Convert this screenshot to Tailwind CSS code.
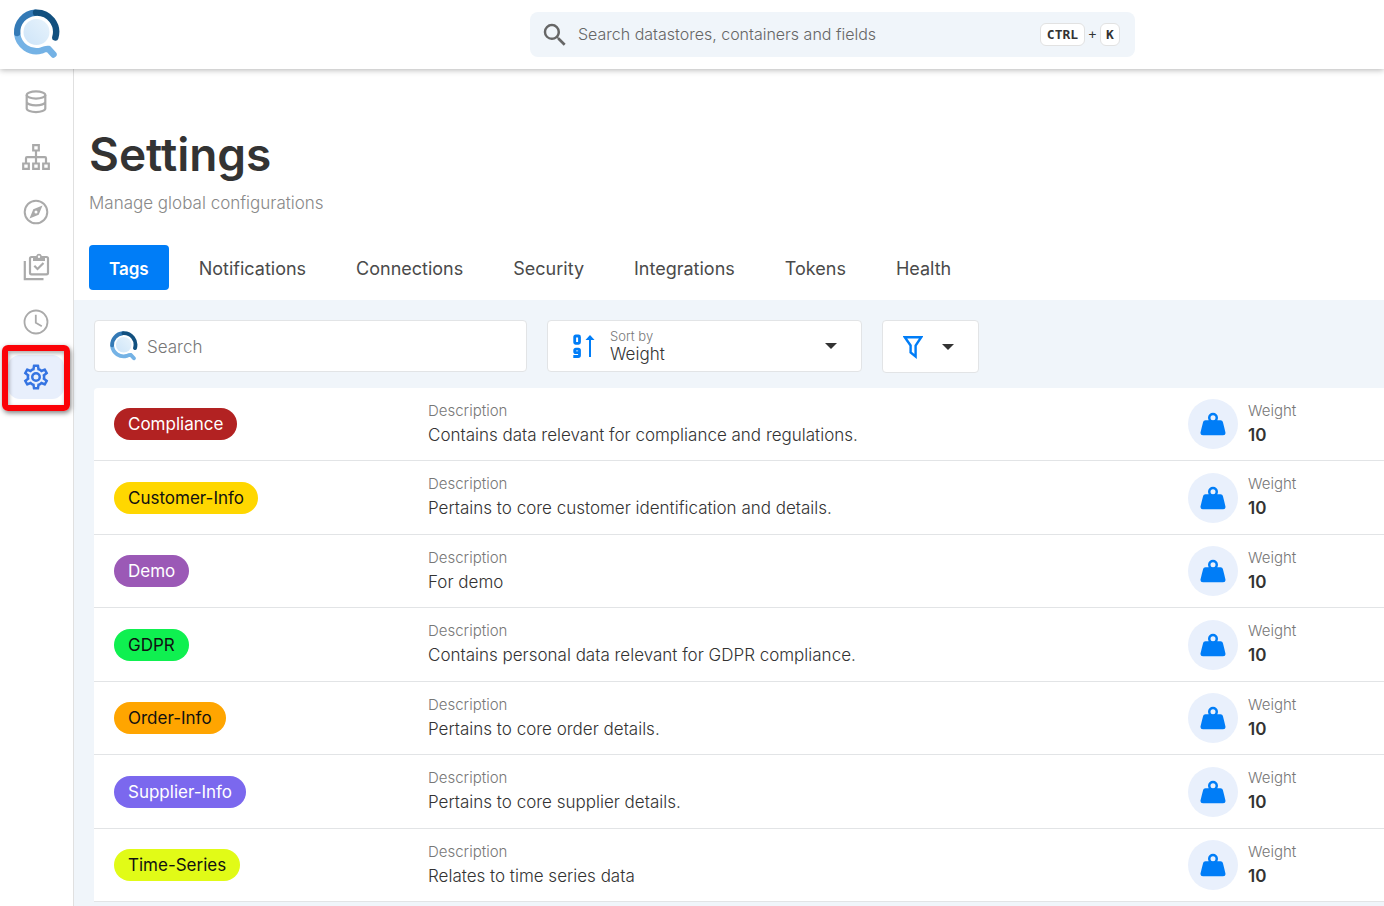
<!DOCTYPE html>
<html lang="en">
<head>
<meta charset="utf-8">
<meta name="viewport" content="width=device-width, initial-scale=1">
<title>Settings</title>
<script src="https://cdn.jsdelivr.net/npm/@tailwindcss/browser@4"></script>
</head>
<body class="flex h-screen flex-col overflow-hidden bg-white font-['Inter',sans-serif] text-[#333]">

<svg class="absolute size-0" aria-hidden="true">
  <defs>
    <linearGradient id="lens" x1="1" y1="0" x2="0" y2="1"><stop offset="0" stop-color="#e8f3fc"/><stop offset="1" stop-color="#cde4f8"/></linearGradient>
    <symbol id="logo" viewBox="0 0 48 50">
      <circle cx="23.500" cy="23" r="13" fill="url(#lens)"/>
      <g fill="none" stroke-width="6.400" stroke-linecap="round" stroke-linejoin="round">
        <path stroke="#74b2e5" d="M4.200 25A19.400 19.400 0 0 0 28.500 41.500Q33 39.500 35.500 40L40.500 45.500"/>
        <path stroke="#347ab6" d="M4.200 24A19.400 19.400 0 0 1 22 3.700"/>
        <path stroke="#12507f" d="M23 3.600A19.400 19.400 0 0 1 42.300 28.500"/>
      </g>
    </symbol>
    <symbol id="weight" viewBox="0 0 24 24">
      <path d="M12,3A4,4 0 0,1 16,7C16,7.730 15.810,8.410 15.460,9H18C18.950,9 19.750,9.670 19.950,10.560C21.960,18.570 22,18.780 22,19A2,2 0 0,1 20,21H4A2,2 0 0,1 2,19C2,18.780 2.040,18.570 4.050,10.560C4.250,9.670 5.050,9 6,9H8.540C8.190,8.410 8,7.730 8,7A4,4 0 0,1 12,3M12,5A2,2 0 0,0 10,7A2,2 0 0,0 12,9A2,2 0 0,0 14,7A2,2 0 0,0 12,5Z"/>
    </symbol>
  </defs>
</svg>

<header class="relative z-10 grid h-[69px] shrink-0 grid-cols-[530px_1fr_249px] items-center bg-white shadow-[0_1px_6px_rgba(0,0,0,0.3)]">
  <a href="#" aria-label="Home" class="ml-[13px] block w-12 pb-[2px]"><svg class="h-[50px] w-12"><use href="#logo"/></svg></a>
  <div class="flex h-[45px] items-center rounded-lg bg-[#f0f5fa] pr-[15px] pl-[10px]">
    <svg class="size-[30px] shrink-0 fill-[#666]" viewBox="0 0 24 24"><path d="M9.500,3A6.500,6.500 0 0,1 16,9.500C16,11.110 15.410,12.590 14.440,13.730L14.710,14H15.500L20.500,19L19,20.500L14,15.500V14.710L13.730,14.440C12.590,15.410 11.110,16 9.500,16A6.500,6.500 0 0,1 3,9.500A6.500,6.500 0 0,1 9.500,3M9.500,5C7,5 5,7 5,9.500C5,12 7,14 9.500,14C12,14 14,12 14,9.500C14,7 12,5 9.500,5Z"/></svg>
    <input type="search" aria-label="Search datastores, containers and fields" placeholder="Search datastores, containers and fields" class="ml-2 min-w-0 flex-1 bg-transparent pb-[2px] text-[16px] font-light outline-none placeholder:text-[#666]">
    <div class="flex items-center font-['DejaVu_Sans_Mono',monospace] text-[13px] font-bold">
      <kbd class="flex h-[23px] w-[45px] items-center justify-center rounded-md border border-[#e2e2e2] bg-white font-['DejaVu_Sans_Mono',monospace]">CTRL</kbd>
      <span class="w-[15px] text-center font-normal">+</span>
      <kbd class="flex h-[23px] w-5 items-center justify-center rounded-md border border-[#e2e2e2] bg-white font-['DejaVu_Sans_Mono',monospace]">K</kbd>
    </div>
  </div>
</header>

<div class="flex min-h-0 flex-1">
  <nav aria-label="Main" class="w-[74px] shrink-0 border-r border-[#e0e0e0] pt-[11px]">
    <ul class="flex w-[72px] flex-col gap-[11px] text-[#aaa]">
      <li><a href="#" aria-label="Datastores" class="flex h-11 items-center justify-center">
        <svg class="size-7" viewBox="0 0 28 28" fill="none" stroke="currentColor" stroke-width="2.200"><ellipse cx="14" cy="7" rx="9.300" ry="3.600"/><path d="M4.700 7v13.500c0 2 4.200 3.600 9.300 3.600s9.300-1.600 9.300-3.600V7M4.700 13.800c0 2 4.200 3.600 9.300 3.600s9.300-1.600 9.300-3.600"/></svg></a></li>
      <li><a href="#" aria-label="Lineage" class="flex h-11 items-center justify-center">
        <svg class="size-7" viewBox="0 0 28 28" fill="none" stroke="currentColor" stroke-width="2.200"><path d="M11.200 2.200h5.600v5.300h-5.600zM1.200 20.500h5.600v5.300H1.200zM11.200 20.500h5.600v5.300h-5.600zM21.200 20.500h5.600v5.300h-5.600zM14 7.500v13M4 20.500v-5.300q0-1 1-1h18q1 0 1 1v5.300"/></svg></a></li>
      <li><a href="#" aria-label="Explore" class="flex h-11 items-center justify-center">
        <svg class="size-7" viewBox="0 0 28 28" fill="none" stroke="currentColor" stroke-width="2"><circle cx="14" cy="14" r="11.300"/><path fill="currentColor" fill-rule="evenodd" stroke="none" d="M20.500 7.500l-3.800 9.200L7.500 20.500l3.800-9.200zM14 12.500a1.500 1.500 0 1 0 0 3 1.500 1.500 0 0 0 0-3z"/></svg></a></li>
      <li><a href="#" aria-label="Checks" class="flex h-11 items-center justify-center">
        <svg class="size-7" viewBox="0 0 28 28" fill="none" stroke="currentColor" stroke-width="2.200"><path d="M2.800 8v18.200H21.500M11 4H9.500Q8 4 8 5.500v14.300q0 1.500 1.500 1.500h15q1.500 0 1.500-1.500V5.500Q26 4 24.500 4H22M12.300 12.800l3.200 3.200 6-6"/><path fill="currentColor" stroke="none" d="M11 3h3.200a2.900 2.900 0 0 1 5.600 0H23v5H11zM17 2.500a1.200 1.200 0 1 0 0 2.400 1.200 1.200 0 0 0 0-2.400z" fill-rule="evenodd"/></svg></a></li>
      <li><a href="#" aria-label="Activity" class="flex h-11 items-center justify-center">
        <svg class="size-7" viewBox="0 0 28 28" fill="none" stroke="currentColor" stroke-width="1.800"><circle cx="14" cy="14" r="11.500"/><path d="M13.800 6.800v8l6 3.400"/></svg></a></li>
      <li class="relative"><a href="#" aria-label="Settings" aria-current="page" class="mx-2 flex h-11 items-center justify-center rounded-xl bg-[#e8effc] text-[#3574e2]">
        <svg class="size-[30px]" viewBox="0 0 24 24" fill="currentColor"><path d="M12,8A4,4 0 0,1 16,12A4,4 0 0,1 12,16A4,4 0 0,1 8,12A4,4 0 0,1 12,8M12,10A2,2 0 0,0 10,12A2,2 0 0,0 12,14A2,2 0 0,0 14,12A2,2 0 0,0 12,10M10,22C9.750,22 9.540,21.820 9.500,21.580L9.130,18.930C8.500,18.680 7.960,18.340 7.440,17.940L4.950,18.950C4.730,19.030 4.460,18.950 4.340,18.730L2.340,15.270C2.210,15.050 2.270,14.780 2.460,14.630L4.570,12.970L4.500,12L4.570,11L2.460,9.370C2.270,9.220 2.210,8.950 2.340,8.730L4.340,5.270C4.460,5.050 4.730,4.960 4.950,5.050L7.440,6.050C7.960,5.660 8.500,5.320 9.130,5.070L9.500,2.420C9.540,2.180 9.750,2 10,2H14C14.250,2 14.460,2.180 14.500,2.420L14.870,5.070C15.500,5.320 16.040,5.660 16.560,6.050L19.050,5.050C19.270,4.960 19.540,5.050 19.660,5.270L21.660,8.730C21.790,8.950 21.730,9.220 21.540,9.370L19.430,11L19.500,12L19.430,13L21.540,14.630C21.730,14.780 21.790,15.050 21.660,15.270L19.660,18.730C19.540,18.950 19.270,19.040 19.050,18.950L16.560,17.950C16.040,18.340 15.500,18.680 14.870,18.930L14.500,21.580C14.460,21.820 14.250,22 14,22H10M11.250,4L10.880,6.610C9.680,6.860 8.620,7.500 7.850,8.390L5.440,7.350L4.690,8.650L6.800,10.200C6.400,11.370 6.400,12.640 6.800,13.800L4.680,15.360L5.430,16.660L7.860,15.620C8.630,16.500 9.680,17.140 10.870,17.380L11.240,20H12.760L13.130,17.390C14.320,17.140 15.370,16.500 16.140,15.620L18.570,16.660L19.320,15.360L17.200,13.810C17.600,12.640 17.600,11.370 17.200,10.200L19.310,8.650L18.560,7.350L16.150,8.390C15.380,7.500 14.320,6.860 13.120,6.620L12.750,4H11.250Z"/></svg></a>
        <span class="pointer-events-none absolute -top-[10px] left-[2px] h-[66px] w-[68px] rounded-md border-[6px] border-[#fb0207] shadow-[1px_2px_5px_rgba(0,0,0,0.5),inset_1px_2px_4px_rgba(0,0,0,0.35)]"></span></li>
    </ul>
  </nav>

  <main class="flex min-w-0 flex-1 flex-col">
    <div class="px-[15px] pt-[57px] pb-[10px]">
      <h1 class="text-[46px] leading-[56px] font-semibold">Settings</h1>
      <p class="mt-[9px] text-[17px] leading-6 font-light text-[#888]">Manage global configurations</p>
      <div role="tablist" class="mt-[30px] flex gap-[10px] text-[18px] text-[#4a4a4a]">
        <button role="tab" aria-selected="true" class="h-[45px] rounded bg-[#007df7] px-5 pt-[4px] text-[17px] font-semibold text-white">Tags</button>
        <button role="tab" class="h-[45px] px-5 pt-[2px]">Notifications</button>
        <button role="tab" class="h-[45px] px-5 pt-[2px]">Connections</button>
        <button role="tab" class="h-[45px] px-5 pt-[2px]">Security</button>
        <button role="tab" class="h-[45px] px-5 pt-[2px]">Integrations</button>
        <button role="tab" class="h-[45px] px-5 pt-[2px]">Tokens</button>
        <button role="tab" class="h-[45px] px-5 pt-[2px]">Health</button>
      </div>
    </div>

    <section class="min-h-0 flex-1 overflow-hidden bg-[#f0f5fa] pt-5 pl-5">
      <div class="flex items-start gap-5">
        <label class="flex h-[52px] w-[433px] items-center rounded border border-[#e2e4e6] bg-white px-[14px]">
          <svg class="h-[30px] w-[30px] shrink-0"><use href="#logo"/></svg>
          <input type="search" aria-label="Search tags" placeholder="Search" class="ml-2 min-w-0 flex-1 bg-transparent pt-[3px] text-[17px] font-light outline-none placeholder:text-[#777]">
        </label>
        <div class="relative flex h-[52px] w-[315px] items-center rounded border border-[#e2e4e6] bg-white pl-6">
          <svg class="h-6 w-6 shrink-0" viewBox="0 0 24 24" fill="none" stroke="#007df7" stroke-width="2.800"><rect x="2.700" y="2" width="4.800" height="7.300" rx="1"/><path d="M1.300 22.500h5q1.200 0 1.200-1.200v-5q0-1.200-1.200-1.200H3.900q-1.200 0-1.200 1.200v1.400q0 1 1.200 1H7.500"/><path stroke-width="2" d="M18 23V3"/><path fill="#007df7" stroke="none" d="M13.500 6L18 1l4.500 5z"/></svg>
          <div class="ml-[14px] flex min-w-0 flex-1 flex-col">
            <label for="sort" class="text-[13px] leading-4 font-light text-[#777]">Sort by</label>
            <select id="sort" class="w-full appearance-none bg-transparent text-[17px] leading-5 font-light outline-none"><option>Weight</option></select>
          </div>
          <svg class="pointer-events-none mr-6 h-[6px] w-3 shrink-0" viewBox="0 0 12 6"><path fill="#333" d="M0 0h12L6 6z"/></svg>
        </div>
        <button aria-label="Filter" class="flex h-[53px] w-[97px] items-center gap-[19px] rounded border border-[#e2e4e6] bg-white pl-5">
          <svg class="h-6 w-5" viewBox="0 0 20 24" fill="none" stroke="#007df7" stroke-width="2.400"><path d="M1.800 2.300h16.400L12.600 10.500V21.500L7.600 17.500v-7z"/></svg>
          <svg class="h-[6px] w-3" viewBox="0 0 12 6"><path fill="#333" d="M0 0h12L6 6z"/></svg>
        </button>
      </div>

      <ul id="tags" class="mt-[15px] rounded-tl bg-white"></ul>
    </section>
  </main>
</div>

<template id="row">
  <li class="grid h-[73px] grid-cols-[314px_1fr_196px] items-center border-b border-[#e2e4e6] pl-5 even:h-[74px]">
    <div><span data-tag class="inline-flex h-8 items-center rounded-full px-[14px] pt-[2px] align-middle text-[17px]"></span></div>
    <div class="pb-[3px]">
      <p class="text-[15px] leading-6 font-light text-[#777]">Description</p>
      <p data-desc class="text-[17px] leading-6 font-light"></p>
    </div>
    <div class="flex items-center gap-[10px]">
      <span class="flex size-[50px] items-center justify-center rounded-full bg-[#e9f0fc]"><svg class="size-[30px] fill-[#007df7]"><use href="#weight"/></svg></span>
      <div class="pb-[3px]">
        <p class="text-[15px] leading-6 font-light text-[#777]">Weight</p>
        <p class="text-[17px] leading-6 font-semibold">10</p>
      </div>
    </div>
  </li>
</template>

<script>
const tags = [
  ['Compliance', '#b22222', '#fff', 'Contains data relevant for compliance and regulations.'],
  ['Customer-Info', '#ffd700', '#111', 'Pertains to core customer identification and details.'],
  ['Demo', '#9b59b6', '#fff', 'For demo'],
  ['GDPR', '#0ff050', '#111', 'Contains personal data relevant for GDPR compliance.'],
  ['Order-Info', '#ffa500', '#111', 'Pertains to core order details.'],
  ['Supplier-Info', '#7b68ee', '#fff', 'Pertains to core supplier details.'],
  ['Time-Series', '#e1fb17', '#111', 'Relates to time series data']
];
const list = document.getElementById('tags');
for (const [name, bg, fg, desc] of tags) {
  const row = document.getElementById('row').content.cloneNode(true);
  const tag = row.querySelector('[data-tag]');
  tag.textContent = name;
  tag.style.backgroundColor = bg;
  tag.style.color = fg;
  row.querySelector('[data-desc]').textContent = desc;
  list.append(row);
}
</script>
</body>
</html>
